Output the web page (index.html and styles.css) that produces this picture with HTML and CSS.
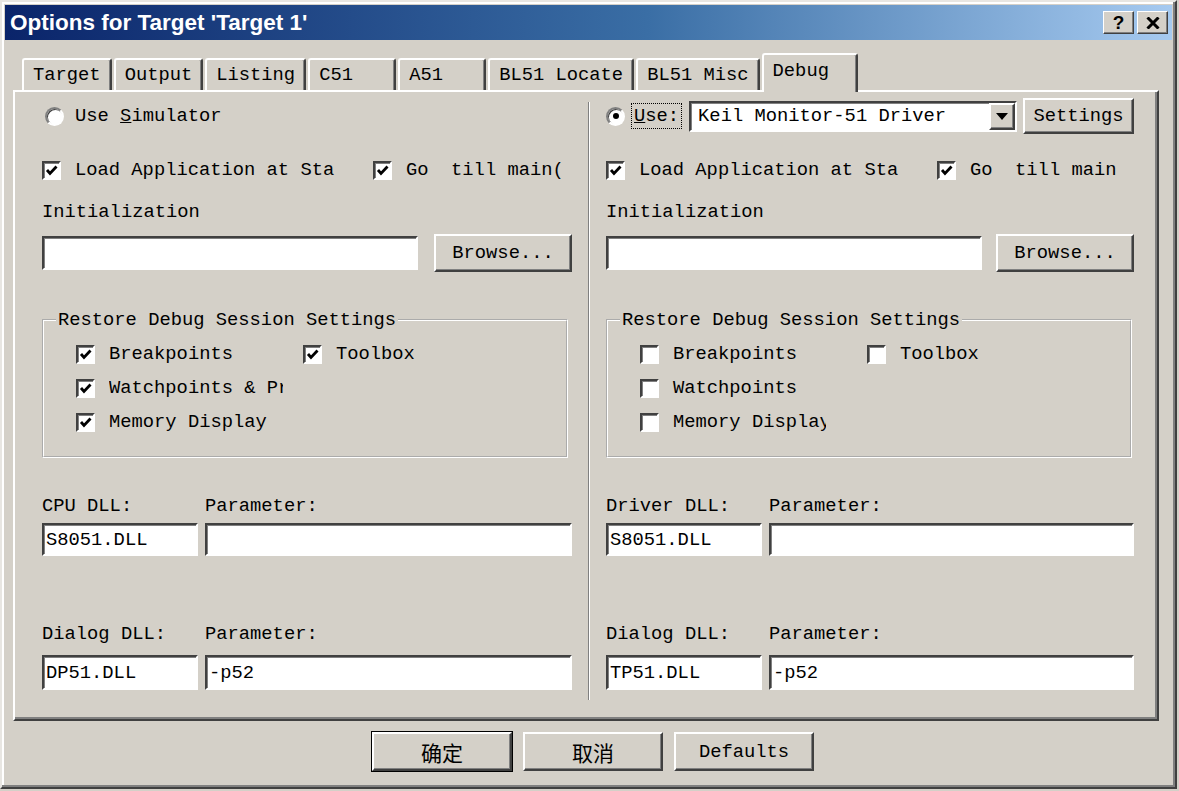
FILE: index.html
```html
<!DOCTYPE html>
<html>
<head>
<meta charset="utf-8">
<title>Options for Target 'Target 1'</title>
<link rel="stylesheet" href="styles.css">
</head>
<body>
<div class="dialog">
  <div class="titlebar">
    <span class="title">Options for Target 'Target 1'</span>
    <div class="caption-btns">
      <span class="cap-btn help">?</span>
      <span class="cap-btn close"><svg width="14" height="12" viewBox="0 0 14 12"><path d="M1.5 0.5 L12.5 11.5 M12.5 0.5 L1.5 11.5" stroke="#000" stroke-width="3" fill="none"/></svg></span>
    </div>
  </div>
  <div class="content">
    <div class="tabs">
      <div class="tab">Target</div>
      <div class="tab">Output</div>
      <div class="tab">Listing</div>
      <div class="tab">C51</div>
      <div class="tab">A51</div>
      <div class="tab">BL51 Locate</div>
      <div class="tab">BL51 Misc</div>
      <div class="tab active">Debug</div>
    </div>
    <div class="panel">
      <div class="col col-left">
        <div class="row r1">
          <span class="radio"></span>
          <span class="sim-label">Use <u>S</u>imulator</span>
        </div>
        <div class="row r2">
          <span class="cb-item first"><span class="cb on"><svg viewBox="0 0 15 15"><path d="M3 7 L6 10.5 L12.5 3.5" stroke="#000" stroke-width="2.8" fill="none"/></svg></span><span class="txt">Load Application at Sta</span></span>
          <span class="cb-item"><span class="cb on"><svg viewBox="0 0 15 15"><path d="M3 7 L6 10.5 L12.5 3.5" stroke="#000" stroke-width="2.8" fill="none"/></svg></span><span class="txt">Go  till main(</span></span>
        </div>
        <div class="row r3">Initialization</div>
        <div class="row r4">
          <div class="field init"></div>
          <div class="btn browse">Browse...</div>
        </div>
        <fieldset class="group">
          <legend>Restore Debug Session Settings</legend>
          <div class="group-grid">
            <span class="cb-item"><span class="cb on"><svg viewBox="0 0 15 15"><path d="M3 7 L6 10.5 L12.5 3.5" stroke="#000" stroke-width="2.8" fill="none"/></svg></span><span class="txt">Breakpoints</span></span>
            <span class="cb-item"><span class="cb on"><svg viewBox="0 0 15 15"><path d="M3 7 L6 10.5 L12.5 3.5" stroke="#000" stroke-width="2.8" fill="none"/></svg></span><span class="txt">Toolbox</span></span>
            <span class="cb-item span2"><span class="cb on"><svg viewBox="0 0 15 15"><path d="M3 7 L6 10.5 L12.5 3.5" stroke="#000" stroke-width="2.8" fill="none"/></svg></span><span class="txt clip-watch">Watchpoints &amp; Pr</span></span>
            <span class="cb-item span2"><span class="cb on"><svg viewBox="0 0 15 15"><path d="M3 7 L6 10.5 L12.5 3.5" stroke="#000" stroke-width="2.8" fill="none"/></svg></span><span class="txt">Memory Display</span></span>
          </div>
        </fieldset>
        <div class="dll-labels first-dll"><span>CPU DLL:</span><span>Parameter:</span></div>
        <div class="dll-fields first-fields"><div class="field">S8051.DLL</div><div class="field"></div></div>
        <div class="dll-labels second-dll"><span>Dialog DLL:</span><span>Parameter:</span></div>
        <div class="dll-fields second-fields"><div class="field">DP51.DLL</div><div class="field">-p52</div></div>
      </div>

      <div class="sep"></div>

      <div class="col col-right">
        <div class="row r1">
          <span class="radio on"></span>
          <span class="use-label"><u>U</u>se:</span>
          <div class="combo">
            <span class="combo-text">Keil Monitor-51 Driver</span>
            <span class="combo-btn"><svg width="12" height="7" viewBox="0 0 12 7"><path d="M0 0 H12 L6 7 Z" fill="#000"/></svg></span>
          </div>
          <div class="btn settings">Settings</div>
        </div>
        <div class="row r2">
          <span class="cb-item first"><span class="cb on"><svg viewBox="0 0 15 15"><path d="M3 7 L6 10.5 L12.5 3.5" stroke="#000" stroke-width="2.8" fill="none"/></svg></span><span class="txt">Load Application at Sta</span></span>
          <span class="cb-item"><span class="cb on"><svg viewBox="0 0 15 15"><path d="M3 7 L6 10.5 L12.5 3.5" stroke="#000" stroke-width="2.8" fill="none"/></svg></span><span class="txt">Go  till main</span></span>
        </div>
        <div class="row r3">Initialization</div>
        <div class="row r4">
          <div class="field init"></div>
          <div class="btn browse">Browse...</div>
        </div>
        <fieldset class="group">
          <legend>Restore Debug Session Settings</legend>
          <div class="group-grid">
            <span class="cb-item"><span class="cb"></span><span class="txt">Breakpoints</span></span>
            <span class="cb-item"><span class="cb"></span><span class="txt">Toolbox</span></span>
            <span class="cb-item span2"><span class="cb"></span><span class="txt">Watchpoints</span></span>
            <span class="cb-item span2"><span class="cb"></span><span class="txt clip-mem">Memory Display</span></span>
          </div>
        </fieldset>
        <div class="dll-labels first-dll"><span>Driver DLL:</span><span>Parameter:</span></div>
        <div class="dll-fields first-fields"><div class="field">S8051.DLL</div><div class="field"></div></div>
        <div class="dll-labels second-dll"><span>Dialog DLL:</span><span>Parameter:</span></div>
        <div class="dll-fields second-fields"><div class="field">TP51.DLL</div><div class="field">-p52</div></div>
      </div>
    </div>
    <div class="bottom-btns">
      <div class="btn big default cjk">确定</div>
      <div class="btn big cjk">取消</div>
      <div class="btn big">Defaults</div>
    </div>
  </div>
</div>
</body>
</html>
```

FILE: styles.css
```css
* { box-sizing: border-box; }
html, body { margin: 0; padding: 0; }
body {
  width: 1179px;
  height: 791px;
  overflow: hidden;
  background: #d4d0c8;
  font-family: "Liberation Mono", "DejaVu Sans Mono", monospace;
  font-size: 18.8px;
  color: #000;
}
.dialog {
  width: 1177px;
  height: 789px;
  background: #d4d0c8;
  border: 2px solid;
  border-color: #e8e6e2 #404040 #404040 #e8e6e2;
  box-shadow: inset -2px -2px 0 #808080, inset 2px 2px 0 #fff;
  padding: 3px;
  display: flex;
  flex-direction: column;
}

/* title bar */
.titlebar {
  height: 35px;
  flex: none;
  background: linear-gradient(to right, #0a246a 0%, #3a6ea5 55%, #a6caf0 100%);
  display: flex;
  align-items: center;
  justify-content: space-between;
  padding: 0 4px 0 5px;
}
.title {
  font-family: "Liberation Sans", Arial, sans-serif;
  font-weight: bold;
  font-size: 22.5px;
  color: #fff;
  white-space: pre;
}
.caption-btns { display: flex; gap: 3px; }
.cap-btn {
  width: 31px;
  height: 23px;
  background: #d4d0c8;
  border: 1px solid;
  border-color: #fff #404040 #404040 #fff;
  box-shadow: inset -1px -1px 0 #808080;
  display: flex;
  align-items: center;
  justify-content: center;
  font-family: "Liberation Sans", Arial, sans-serif;
  font-weight: bold;
  font-size: 19px;
  line-height: 1;
}

/* main content */
.content {
  flex: 1;
  display: flex;
  flex-direction: column;
  padding: 13px 13px 0 8px;
}
.tabs {
  height: 37px;
  display: flex;
  align-items: flex-end;
  padding-left: 9px;
  flex: none;
}
.tab {
  height: 32px;
  min-width: 88px;
  margin-right: 2px;
  padding: 0 9px 0 9px;
  border-top: 2px solid #fff;
  border-left: 2px solid #fff;
  border-right: 2px solid #404040;
  border-radius: 3px 3px 0 0;
  box-shadow: inset -1px 0 0 #808080;
  display: flex;
  align-items: center;
  white-space: pre;
  background: #d4d0c8;
}
.tab.active {
  height: 39px;
  min-width: 96px;
  margin-bottom: -2px;
  padding-bottom: 6px;
  position: relative;
  z-index: 2;
}

.panel {
  height: 631px;
  flex: none;
  border: 2px solid;
  border-color: #fff #404040 #404040 #fff;
  box-shadow: inset -2px -2px 0 #808080;
  padding: 6px 23px 0 27px;
  display: grid;
  grid-template-columns: 530px 1fr 528px;
  align-items: start;
}
.col { display: flex; flex-direction: column; }
.sep {
  align-self: stretch;
  justify-self: center;
  width: 2px;
  margin: 4px 0 19px;
  border-left: 1px solid #808080;
  border-right: 1px solid #fff;
}

.row { display: flex; align-items: center; white-space: pre; }
.r1 { height: 36px; }
.r2 { height: 24px; margin-top: 24px; }
.r3 { height: 24px; margin-top: 18px; }
.r4 { height: 38px; margin-top: 10px; justify-content: space-between; }

/* radio */
.radio {
  width: 19px;
  height: 19px;
  flex: none;
  border-radius: 50%;
  border: 2px solid;
  border-color: #808080 #fff #fff #808080;
  background: #fff;
  box-shadow: inset 1px 1px 0 #404040;
  display: inline-flex;
  align-items: center;
  justify-content: center;
}
.radio.on::after {
  content: "";
  width: 6px;
  height: 6px;
  border-radius: 50%;
  background: #000;
}
.col-left .radio { margin-left: 3px; }
.sim-label { margin-left: 11px; }
.use-label {
  margin-left: 7px;
  padding: 1px 2px;
  outline: 1px dotted #000;
  line-height: 22px;
}

/* combo */
.combo {
  margin-left: 8px;
  width: 328px;
  height: 31px;
  background: #fff;
  border: 2px solid;
  border-color: #404040 #fff #fff #404040;
  box-shadow: inset 1px 1px 0 #808080;
  display: flex;
  align-items: center;
  justify-content: space-between;
  padding: 0 0 0 7px;
}
.combo-btn {
  width: 26px;
  height: 27px;
  background: #d4d0c8;
  border: 2px solid;
  border-color: #fff #404040 #404040 #fff;
  box-shadow: inset -1px -1px 0 #808080;
  display: flex;
  align-items: center;
  justify-content: center;
}

/* buttons */
.btn {
  background: #d4d0c8;
  border: 2px solid;
  border-color: #fff #404040 #404040 #fff;
  box-shadow: inset -1px -1px 0 #808080;
  display: flex;
  align-items: center;
  justify-content: center;
  white-space: pre;
}
.settings { margin-left: 6px; width: 111px; height: 36px; }
.browse { width: 138px; height: 38px; }

/* fields */
.field {
  height: 34px;
  background: #fff;
  border: 2px solid;
  border-color: #404040 #fff #fff #404040;
  box-shadow: inset 1px 1px 0 #808080;
  display: flex;
  align-items: center;
  padding-left: 2px;
  white-space: pre;
}
.field.init { width: 376px; }

/* checkboxes */
.cb-item { display: inline-flex; align-items: center; white-space: pre; }
.cb-item.first { width: 331px; }
.cb {
  width: 19px;
  height: 19px;
  flex: none;
  background: #fff;
  border: 2px solid;
  border-color: #404040 #fff #fff #404040;
  box-shadow: inset 1px 1px 0 #808080;
  margin-right: 14px;
  display: inline-flex;
  align-items: center;
  justify-content: center;
}
.cb svg { width: 15px; height: 15px; display: block; }
.clip-watch { display: inline-block; width: 174px; overflow: hidden; }
.clip-mem { display: inline-block; width: 153px; overflow: hidden; }

/* group box */
.group {
  margin: 36px 0 0 0;
  padding: 0;
  width: 526px;
  min-width: 0;
  border: 2px groove #fff;
}
.group legend {
  margin-left: 12px;
  padding: 0 2px;
  height: 24px;
  line-height: 24px;
  white-space: pre;
}
.group-grid {
  display: grid;
  grid-template-columns: 227px auto;
  grid-auto-rows: 24px;
  row-gap: 10px;
  padding: 10px 0 22px 32px;
}
.span2 { grid-column: 1 / 3; }

/* DLL rows */
.dll-labels, .dll-fields {
  display: grid;
  grid-template-columns: 156px 1fr;
  column-gap: 7px;
}
.dll-labels { height: 24px; align-items: center; white-space: pre; }
.first-dll { margin-top: 36px; }
.first-fields { margin-top: 5px; }
.first-fields .field { height: 33px; }
.second-dll { margin-top: 66px; }
.second-fields { margin-top: 9px; }
.second-fields .field { height: 35px; }

/* bottom buttons */
.bottom-btns {
  display: flex;
  justify-content: center;
  gap: 11px;
  margin-top: 11px;
  padding-left: 14px;
}
.btn.big { width: 140px; height: 39px; }
.btn.default {
  outline: 1px solid #000;
}
.cjk {
  font-family: "Noto Sans CJK SC", "Liberation Sans", sans-serif;
  font-size: 21px;
}
```
